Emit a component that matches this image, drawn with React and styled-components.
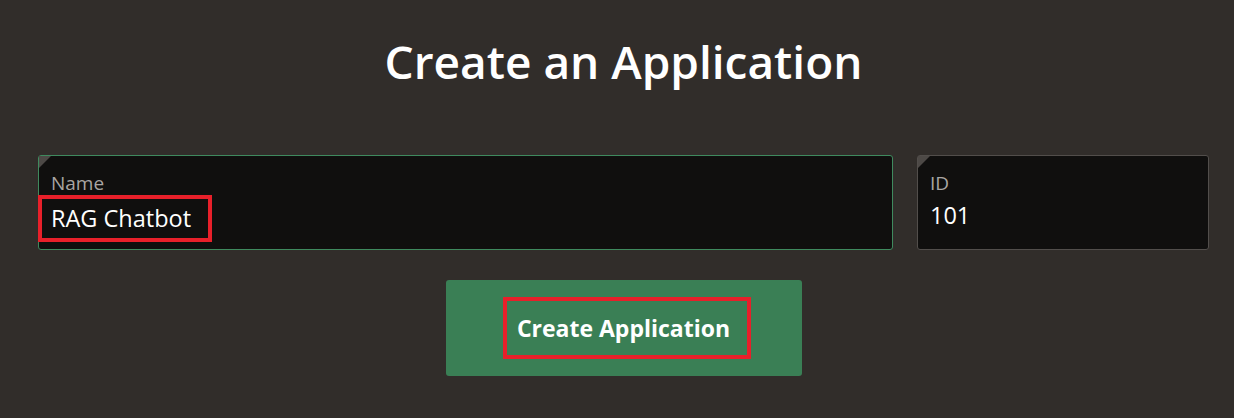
import styled, { createGlobalStyle } from "styled-components";

const GlobalStyle = createGlobalStyle`
  html, body {
    margin: 0;
    padding: 0;
    background: #312d2a;
  }
  body {
    font-family: "Open Sans", "Noto Sans", sans-serif;
  }
`;

const Page = styled.div`
  width: 1234px;
  height: 418px;
  box-sizing: border-box;
  padding: 27px 25px 0 38px;
  display: flex;
  flex-direction: column;
  align-items: center;
`;

const Title = styled.h1`
  margin: 0;
  font-size: 46px;
  font-weight: 600;
  color: #ffffff;
  line-height: 68px;
`;

const FieldRow = styled.div`
  align-self: stretch;
  display: flex;
  gap: 24px;
  margin-top: 60px;
`;

const Field = styled.div`
  position: relative;
  flex: none;
  width: ${(p) => p.$width}px;
  height: 95px;
  box-sizing: border-box;
  background: #100f0e;
  border: 1px solid ${(p) => (p.$focused ? "#3f8a5e" : "#524e4b")};
  border-radius: 3px;
  padding: 14px 12px 0 12px;
  display: flex;
  flex-direction: column;

  &::before {
    content: "";
    position: absolute;
    top: 0;
    left: 0;
    border-style: solid;
    border-width: 12px 12px 0 0;
    border-color: #4d4946 transparent transparent transparent;
  }
`;

const Label = styled.span`
  font-size: 19px;
  color: #a9a6a3;
  line-height: 26px;
`;

const Value = styled.span`
  align-self: flex-start;
  font-size: 23.5px;
  color: #ffffff;
  line-height: 30px;
  margin-top: 4px;
  ${(p) =>
    p.$marked &&
    `
    margin-left: -13px;
    margin-top: -1px;
    padding: 4px 17px 5px 9px;
    border: 4px solid #e8202a;
  `}
`;

const Button = styled.button`
  margin-top: 30px;
  width: 356px;
  height: 96px;
  background: #3a7f55;
  border: none;
  border-radius: 3px;
  display: flex;
  align-items: center;
  justify-content: center;
  cursor: pointer;
  font-family: inherit;
`;

const ButtonText = styled.span`
  margin-left: 7px;
  font-size: 23px;
  font-weight: 700;
  color: #ffffff;
  padding: 12px 17px 12px 10px;
  border: 4px solid #e8202a;
  line-height: 30px;
`;

export default function App() {
  return (
    <>
      <GlobalStyle />
      <Page>
        <Title>Create an Application</Title>
        <FieldRow>
          <Field $width={855} $focused>
            <Label>Name</Label>
            <Value $marked>RAG Chatbot</Value>
          </Field>
          <Field $width={292}>
            <Label>ID</Label>
            <Value>101</Value>
          </Field>
        </FieldRow>
        <Button>
          <ButtonText>Create Application</ButtonText>
        </Button>
      </Page>
    </>
  );
}
